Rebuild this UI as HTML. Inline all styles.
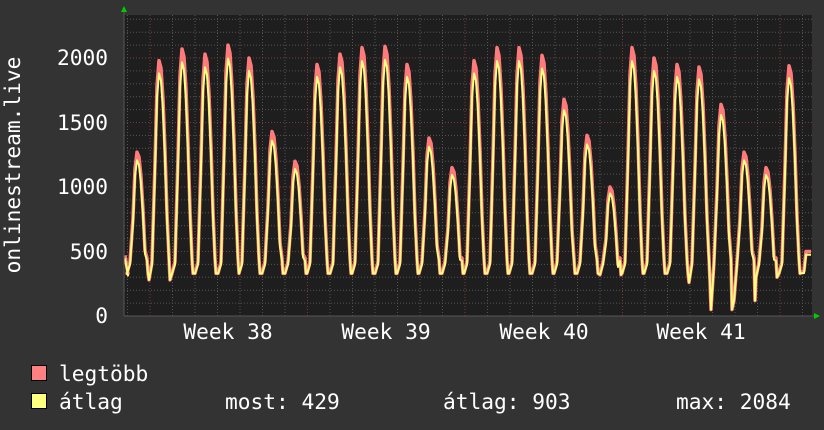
<!DOCTYPE html>
<html><head><meta charset="utf-8"><style>
body{margin:0;background:#333;width:824px;height:430px;overflow:hidden}
svg{display:block}
text{font-family:"DejaVu Sans Mono","Liberation Mono",monospace;fill:#fff;font-size:21.2px}
</style></head><body>
<svg id="s" width="824" height="430" xmlns="http://www.w3.org/2000/svg">
<rect width="824" height="430" fill="#333"/>
<rect x="124" y="15" width="688" height="301" fill="#1e1e1e"/>
<g id="grid"></g>
<path id="mx" fill="none" stroke="#ff7b7b" stroke-width="3.5" stroke-linejoin="round"/>
<path id="av" fill="none" stroke="#ffff80" stroke-width="2" stroke-linejoin="round"/>
<line x1="124" y1="316" x2="814" y2="316" stroke="#555" stroke-width="1"/>
<line x1="124" y1="12" x2="124" y2="316" stroke="#555" stroke-width="1"/>
<polygon points="121,12 127,12 124,6" fill="#0c0"/>
<polygon points="814,313 814,319 820,316" fill="#0c0"/>
<g text-anchor="end">
<text x="108" y="65">2000</text>
<text x="108" y="130">1500</text>
<text x="108" y="194">1000</text>
<text x="108" y="259">500</text>
<text x="108" y="323">0</text>
</g>
<g text-anchor="middle">
<text x="228" y="339">Week 38</text>
<text x="386" y="339">Week 39</text>
<text x="544" y="339">Week 40</text>
<text x="701" y="339">Week 41</text>
</g>
<text transform="translate(20,165) rotate(-90)" text-anchor="middle">onlinestream.live</text>
<rect x="31.5" y="365.5" width="15" height="15" fill="#ff8080" stroke="#000"/>
<rect x="31.5" y="393.5" width="15" height="15" fill="#ffff80" stroke="#000"/>
<text x="59" y="381">legtöbb</text>
<text x="59" y="409">átlag</text>
<text x="225" y="409">most: 429</text>
<text x="443" y="409">átlag: 903</text>
<text x="676" y="409">max: 2084</text>
</svg>
<script>
var g=document.getElementById('grid'),h='';
function Y(v){return 316-v*0.129;}
for(var v=100;v<=2300;v+=100){var y=Y(v);var maj=v%500==0;h+='<line x1="124" x2="812" y1="'+y+'" y2="'+y+'" stroke="'+(maj?'#7a3a3a':'#555')+'" stroke-dasharray="1,2"/>';}
for(var x=127.5;x<812;x+=22.5){var maj=Math.abs(((x-150)%157.5+157.5)%157.5)<1;h+='<line y1="15" y2="316" x1="'+x+'" x2="'+x+'" stroke="'+(maj?'#7a3a3a':'#555')+'" stroke-dasharray="1,2"/>';}
g.innerHTML=h;
var peaks=[[138,1270],[160,1980],[183,2070],[206,2030],[229,2100],[250,2000],[273,1430],[296,1200],[318,1950],[341,2030],[363,2080],[386,2090],[408,1950],[430,1380],[453,1150],[475,1980],[498,2080],[520,2080],[543,2020],[565,1680],[588,1400],[611,1000],[633,2080],[655,2000],[678,1950],[700,1930],[722,1640],[745,1270],[767,1150],[790,1940]];
var mins=[330,280,330,330,330,330,330,330,330,330,330,330,330,330,330,330,330,330,330,330,330,320,330,330,330,260,50,120,300,330];
function build(f,off){var d='M125 '+Y(470*f);d+=' L128 '+Y(330*f);
for(var i=0;i<peaks.length;i++){var p=peaks[i][0],v=peaks[i][1]*f,m=mins[i];
d+=' L'+(p-11)+' '+Y(m)+' L'+(p-8)+' '+Y(420*f)+' L'+(p-5)+' '+Y(v*0.6)+' L'+(p-3)+' '+Y(v*0.9)+' L'+(p-1)+' '+Y(v)+' L'+(p+1)+' '+Y(v*0.97)+' L'+(p+3)+' '+Y(v*0.85)+' L'+(p+5)+' '+Y(v*0.65)+' L'+(p+7)+' '+Y(v*0.4)+' L'+(p+9)+' '+Y(450*f)+' L'+(p+10)+' '+Y(m);}
d+=' L804 '+Y(350*f)+' L806 '+Y(500*f)+' L811 '+Y(500*f);return d;}
document.getElementById('mx').setAttribute('d',build(1.0));
document.getElementById('av').setAttribute('d',build(0.95));
</script>
</body></html>
